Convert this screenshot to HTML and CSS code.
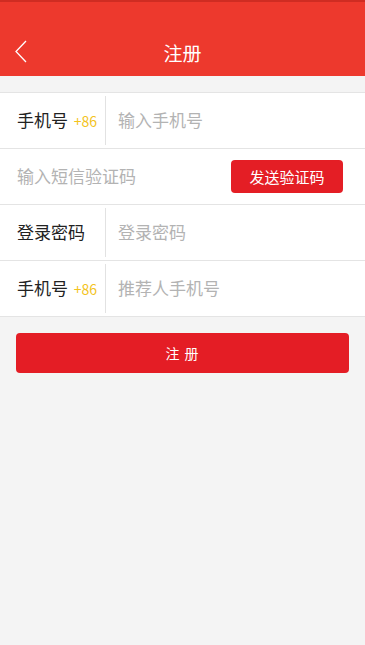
FILE: index.html
```html
<!DOCTYPE html>
<html lang="zh-CN">
<head>
<meta charset="utf-8">
<title>注册</title>
<link rel="stylesheet" href="styles.css">
</head>
<body>
<div class="app">
  <header class="header">
    <div class="status-edge"></div>
    <div class="status-space"></div>
    <div class="toolbar">
      <span class="back">
        <svg width="12" height="23" viewBox="0 0 12 23"><polyline points="11,1 1,11.5 11,22" fill="none" stroke="#ffffff" stroke-width="1.3" stroke-linejoin="miter"/></svg>
      </span>
      <h1 class="title">注册</h1>
    </div>
  </header>
  <div class="spacer"></div>
  <div class="form">
    <div class="row">
      <div class="label">手机号 <span class="code">+86</span></div>
      <div class="divider"></div>
      <div class="placeholder">输入手机号</div>
    </div>
    <div class="row">
      <div class="placeholder full">输入短信验证码</div>
      <button class="send">发送验证码</button>
    </div>
    <div class="row">
      <div class="label">登录密码</div>
      <div class="divider"></div>
      <div class="placeholder">登录密码</div>
    </div>
    <div class="row">
      <div class="label">手机号 <span class="code">+86</span></div>
      <div class="divider"></div>
      <div class="placeholder">推荐人手机号</div>
    </div>
  </div>
  <div class="actions">
    <button class="submit">注 册</button>
  </div>
</div>
</body>
</html>
```

FILE: styles.css
```css
* { box-sizing: border-box; }
html, body {
  margin: 0;
  padding: 0;
  background: #f4f4f4;
  font-family: "Noto Sans CJK SC", "Noto Sans", sans-serif;
}
.app {
  width: 365px;
  min-height: 645px;
  background: #f4f4f4;
}
.header { background: #ed392d; }
.status-edge { height: 2px; background: #cf2c22; }
.status-space { height: 26px; }
.toolbar {
  height: 48px;
  display: flex;
  align-items: center;
  justify-content: center;
  position: relative;
}
.back {
  position: absolute;
  left: 15px;
  top: 12px;
  display: flex;
}
.title {
  margin: 0;
  color: #ffffff;
  font-size: 19px;
  font-weight: normal;
  line-height: 1;
}
.spacer { height: 16px; }
.form {
  background: #ffffff;
  border-top: 1px solid #e4e4e4;
}
.row {
  height: 56px;
  border-bottom: 1px solid #e4e4e4;
  display: flex;
  align-items: center;
}
.label {
  width: 105px;
  padding-left: 17px;
  font-size: 17px;
  line-height: 1.2;
  margin-bottom: 1px;
  color: #222222;
  white-space: nowrap;
}
.code {
  font-size: 14px;
  color: #f3c31d;
  margin-left: 2px;
}
.divider {
  width: 1px;
  align-self: stretch;
  margin: 3px 0;
  background: #e2e2e2;
}
.placeholder {
  padding-left: 12px;
  font-size: 17px;
  line-height: 1.2;
  margin-bottom: 1px;
  color: #b3b3b3;
  flex: 1;
}
.placeholder.full { padding-left: 17px; }
.send {
  width: 112px;
  height: 33px;
  margin-right: 22px;
  border: none;
  border-radius: 4px;
  background: #e41e25;
  color: #ffffff;
  font-family: inherit;
  font-size: 15px;
  padding: 0;
}
.actions {
  padding: 16px 16px 0;
}
.submit {
  width: 100%;
  height: 40px;
  border: none;
  border-radius: 4px;
  background: #e41d25;
  color: #ffffff;
  font-family: inherit;
  font-size: 14px;
  letter-spacing: 1px;
  padding: 0;
}
```
